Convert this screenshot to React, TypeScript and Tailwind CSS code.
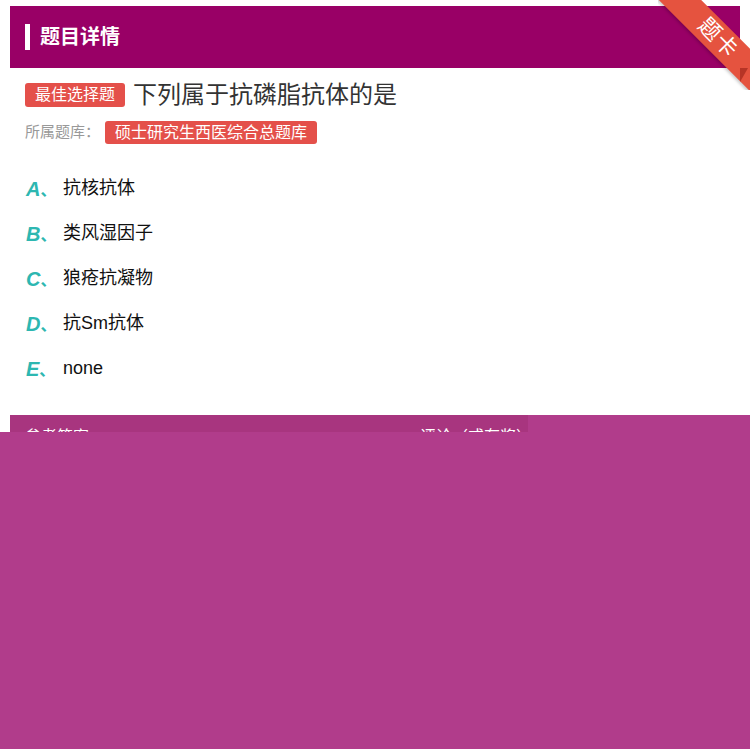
const options = [
    { key: "A", text: "抗核抗体" },
    { key: "B", text: "类风湿因子" },
    { key: "C", text: "狼疮抗凝物" },
    { key: "D", text: "抗Sm抗体" },
    { key: "E", text: "none" },
];

function Ribbon() {
    return (
        <div className="absolute top-0 right-0 w-[92px] h-[90px] overflow-hidden">
            <div className="absolute left-[-12px] top-[23px] w-[144px] h-[30px] rotate-45 bg-[#e5533f] rounded-t-[3px] flex items-center justify-center shadow-[0_2px_3px_rgba(0,0,0,0.2)]">
                <span className="text-white text-[22px] tracking-[1px] leading-none">题卡</span>
            </div>
            <div className="absolute right-[2px] top-[68px] w-0 h-0 border-l-[8px] border-l-[#b63426] border-b-[14px] border-b-transparent" />
        </div>
    );
}

export default function App() {
    return (
        <div
            className="relative min-h-[749px] bg-white overflow-hidden"
            style={{ fontFamily: '"Liberation Sans", "Noto Sans CJK SC", sans-serif' }}
        >
            <div className="pt-[6px]">
                <div className="mx-[10px] h-[62px] bg-[#990066] flex items-center pl-[15px]">
                    <div className="w-[5px] h-[26px] bg-white" />
                    <div className="ml-[10px] text-white text-[20px] font-bold">题目详情</div>
                </div>

                <div className="px-[25px]">
                    <div className="mt-[15px] flex items-center h-[24px]">
                        <span className="h-[24px] px-[10px] rounded-[3px] bg-[#e4504a] text-white text-[16px] leading-[24px]">
                            最佳选择题
                        </span>
                        <span className="ml-[8px] text-[24px] text-[#333] leading-[24px]">下列属于抗磷脂抗体的是</span>
                    </div>
                    <div className="mt-[14px] flex items-center h-[23px]">
                        <span className="text-[15px] text-[#999]">所属题库：</span>
                        <span className="ml-[5px] h-[23px] px-[10px] rounded-[3px] bg-[#e4504a] text-white text-[16px] leading-[23px]">
                            硕士研究生西医综合总题库
                        </span>
                    </div>

                    <div className="mt-[22px]">
                        {options.map((o) => (
                            <div key={o.key} className="h-[45px] flex items-center">
                                <span className="w-[38px] pl-[1px] text-[20px] font-bold italic text-[#2db7b1]">
                                    {o.key}
                                    <span className="not-italic text-[16px]">、</span>
                                </span>
                                <span className="text-[18px] text-[#111]">{o.text}</span>
                            </div>
                        ))}
                    </div>
                </div>

                <div className="mt-[24px] mx-[10px] h-[60px] bg-[#a8357f] flex items-start pt-[10px] px-[15px] text-white text-[16px]">
                    <span className="w-[395px]">参考答案</span>
                    <span>评论（或有奖）</span>
                </div>
            </div>

            <Ribbon />

            <div className="absolute left-[528px] top-[415px] right-0 h-[17px] bg-[#b13c8b]" />
            <div className="absolute left-0 right-0 top-[432px] bottom-0 bg-[#b13c8b]" />
        </div>
    );
}
